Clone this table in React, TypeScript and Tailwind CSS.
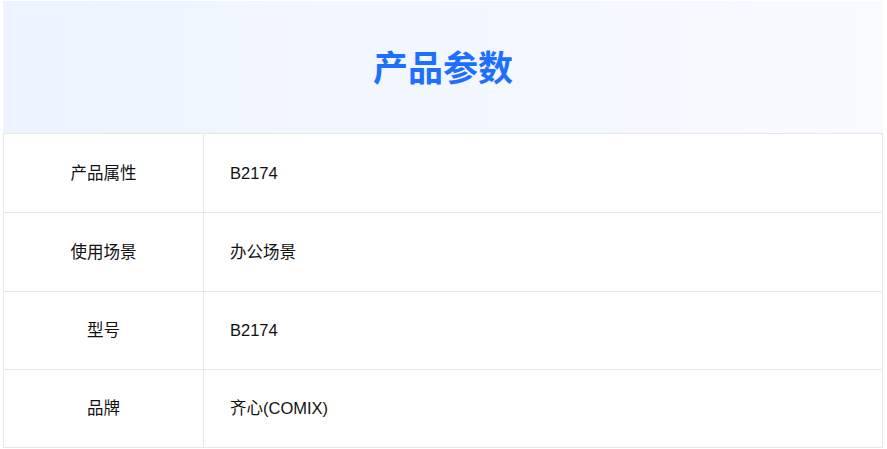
import React from "react";

const rows = [
  ["产品属性", "B2174", "h-[78px]"],
  ["使用场景", "办公场景", "h-[79px]"],
  ["型号", "B2174", "h-[78px]"],
  ["品牌", "齐心(COMIX)", "h-[78px]"],
];

export default function App() {
  return (
    <div
      className="bg-white w-[887px] h-[449px] pl-[3px] pt-[1px]"
      style={{ fontFamily: '"Liberation Sans", Arial, "Noto Sans CJK SC", sans-serif' }}
    >
      <div className="w-[880px]">
        <div className="h-[132px] flex items-center justify-center bg-gradient-to-r from-[#edf4ff] to-[#f8faff]">
          <h1
            className="text-[35px] font-bold text-[#1f6fff] leading-none -mt-[3px]"
            style={{ fontFamily: '"Noto Sans CJK SC", sans-serif' }}
          >
            产品参数
          </h1>
        </div>
        <div className="border border-[#e8e8e8]">
          {rows.map(([k, v, h], i) => (
            <div key={i} className={`flex ${h} ${i > 0 ? "border-t border-[#e8e8e8]" : ""}`}>
              <div className="w-[200px] border-r border-[#e8e8e8] flex items-center justify-center text-[16.5px] text-[#111]">
                {k}
              </div>
              <div className="flex-1 flex items-center pl-[26px] text-[16.5px] text-[#111]">{v}</div>
            </div>
          ))}
        </div>
      </div>
    </div>
  );
}
